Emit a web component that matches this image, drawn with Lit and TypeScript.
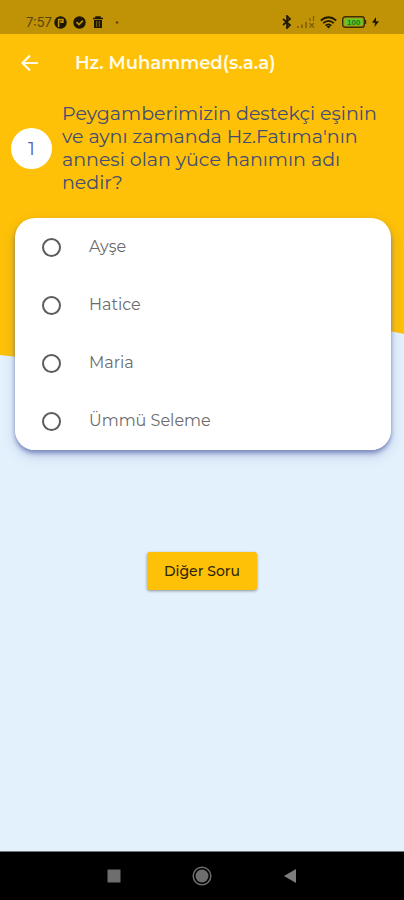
import { LitElement, html, css } from "lit";
import { customElement, property, state } from "lit/decorators.js";

@customElement("status-bar")
class StatusBar extends LitElement {
  static styles = css`
    :host {
      display: flex;
      align-items: flex-end;
      justify-content: space-between;
      box-sizing: border-box;
      height: 34px;
      padding: 0 25px 4px 26px;
      background: #c09205;
      color: #33290a;
      font: 13px/16px Inter, "Open Sans", sans-serif;
    }
    .group {
      display: flex;
      align-items: center;
      height: 16px;
    }
    .left {
      gap: 6px;
    }
    .time {
      color: #5a450a;
      margin-right: -4px;
    }
    .right {
      gap: 5px;
    }
    svg {
      display: block;
    }
    .level {
      font: 700 8px "Liberation Sans", sans-serif;
      fill: #25790f;
    }
  `;
  render() {
    return html`
      <div class="group left">
        <span class="time">7:57</span>
        <svg width="13" height="13" viewBox="0 0 13 13">
          <circle cx="6.5" cy="6.5" r="6.2" fill="#1d1704" />
          <path d="M4.6 11V3.6H9V6.2H7V4.8" fill="none" stroke="#c09205" stroke-width="1.5" />
        </svg>
        <svg width="13" height="13" viewBox="0 0 13 13">
          <circle cx="6.5" cy="6.5" r="6.2" fill="#1d1704" />
          <path d="M3.5 6.2 6 8.6 9.8 4.6" fill="none" stroke="#c09205" stroke-width="1.7" />
        </svg>
        <svg width="12" height="13" viewBox="0 0 12 13">
          <path d="M1 2.5H11M4 2V1H8V2" fill="none" stroke="#1d1704" stroke-width="1.5" />
          <path d="M2 4H10V12H2Z" fill="#1d1704" />
          <path d="M4.7 5V11M7.3 5V11" stroke="#8a6905" stroke-width="0.9" />
        </svg>
        <svg width="12" height="13" viewBox="0 0 12 13">
          <circle cx="7" cy="6.5" r="1.2" fill="#5a450a" />
        </svg>
      </div>
      <div class="group right">
        <svg width="10" height="14" viewBox="0 0 10 14">
          <path d="M1 4 8 10 5 13V1L8 4 1 10" fill="none" stroke="#1d1704" stroke-width="1.7" />
        </svg>
        <svg width="18" height="12" viewBox="0 0 18 12">
          <path d="M1 12V10M5 12V8.5M9 12V6" stroke="#8a6905" stroke-width="2" />
          <path d="M12.500 7 17 11.5M17 7 12.500 11.5M13 5V2M16.5 5V0" stroke="#7d5f05" stroke-width="1.2" />
        </svg>
        <svg width="17" height="13" viewBox="0 0 17 13">
          <g fill="none" stroke="#1d1704" stroke-width="1.7">
            <path d="M0.8 4.5Q8.5-2 16.2 4.5" />
            <path d="M3.2 7.2Q8.5 2.4 13.8 7.2" />
            <path d="M5.6 9.6Q8.5 7 11.4 9.6" />
          </g>
          <path d="M6.6 10.4Q8.5 9 10.4 10.4L8.5 12.6Z" fill="#1d1704" />
        </svg>
        <svg width="25" height="12" viewBox="0 0 25 12">
          <rect x="0.7" y="0.7" width="21.6" height="10.6" rx="2.5" fill="none" stroke="#3c3006" stroke-width="1.4" />
          <rect x="2.5" y="2.5" width="18" height="7" rx="1" fill="#5cc92e" />
          <path d="M23.5 4V8" stroke="#3c3006" stroke-width="1.4" />
          <text class="level" x="5" y="9">100</text>
        </svg>
        <svg width="7" height="10" viewBox="0 0 7 10">
          <path d="M4 0 0 5.8H3L2.5 10 7 4.2H4Z" fill="#1d1704" />
        </svg>
      </div>
    `;
  }
}

@customElement("answer-list")
class AnswerList extends LitElement {
  @property({ attribute: false }) answers: string[] = [];
  @state() private chosen = -1;

  static styles = css`
    fieldset {
      margin: 0;
      padding: 0;
      border: 0;
      border-radius: 20px;
      background: #fff;
      box-shadow: 0 3px 4px #4b5aa099, 0 6px 12px #4b5aa040;
    }
    .answer {
      display: flex;
      align-items: center;
      gap: 28px;
      height: 58px;
      padding: 0 27px;
      color: #6c6c6c;
      font-size: 16px;
      line-height: 22px;
    }
    input {
      appearance: none;
      flex: none;
      box-sizing: border-box;
      width: 19px;
      height: 19px;
      margin: 0;
      border: 2px solid #5c5c5c;
      border-radius: 50%;
    }
    input:checked {
      background: radial-gradient(#5c5c5c 45%, #fff 50%);
    }
  `;
  render() {
    return html`<fieldset aria-label="Cevaplar">
      ${this.answers.map(
        (text, i) => html`<label class="answer">
          <input type="radio" name="answer" .checked=${this.chosen === i} @change=${() => (this.chosen = i)} />
          <span>${text}</span>
        </label>`
      )}
    </fieldset>`;
  }
}

@customElement("app-root")
class AppRoot extends LitElement {
  static styles = css`
    :host {
      display: flex;
      flex-direction: column;
      min-height: 100vh;
      background: #e3f1fd;
      font-family: Montserrat, Inter, sans-serif;
    }
    main {
      position: relative;
      z-index: 0;
      flex: 1;
      display: flex;
      flex-direction: column;
    }
    .backdrop {
      position: absolute;
      inset: 0 0 auto;
      z-index: -1;
      width: 100%;
      height: 324px;
    }
    header {
      display: flex;
      align-items: center;
      gap: 36px;
      height: 58px;
      padding: 0 20px;
      color: #fffbe8;
    }
    button {
      font-family: inherit;
      border: 0;
      cursor: pointer;
    }
    .back {
      display: flex;
      padding: 0;
      background: none;
      color: inherit;
    }
    h1 {
      margin: 0;
      font-size: 18px;
      font-weight: 600;
      line-height: 24px;
    }
    .question {
      display: flex;
      align-items: center;
      gap: 10px;
      padding: 10px 11px 0;
    }
    .number {
      flex: none;
      display: grid;
      place-items: center;
      width: 41px;
      height: 41px;
      border-radius: 50%;
      background: #fff;
      color: #5560b0;
      font-size: 19px;
    }
    h2 {
      margin: 0;
      color: #424c74;
      font-size: 19px;
      font-weight: 400;
      line-height: 23px;
    }
    answer-list {
      display: block;
      margin: 24px 13px 0 15px;
    }
    .next {
      align-self: center;
      margin: 102px 0 40px;
      height: 38px;
      padding: 0 17px;
      border-radius: 3px;
      background: #fec107;
      box-shadow: 0 1px 3px #00000066;
      color: #2e2609;
      font-size: 14px;
      font-weight: 500;
    }
    nav {
      display: flex;
      align-items: center;
      justify-content: center;
      gap: 68px;
      height: 48px;
      border-top: 1px solid #6f777d;
      background: #000;
    }
    nav button {
      display: grid;
      place-items: center;
      width: 20px;
      height: 20px;
      padding: 0;
      background: none;
    }
  `;
  render() {
    return html`
      <status-bar></status-bar>
      <main>
        <svg class="backdrop" viewBox="0 0 404 324" preserveAspectRatio="none" aria-hidden="true">
          <path d="M0 0H404V300C340 284 270 302 200 315C130 328 60 328 0 321Z" fill="#fec107" />
        </svg>
        <header>
          <button class="back" aria-label="Geri">
            <svg width="19" height="18" viewBox="0 0 19 18">
              <path d="M18 9H3M10 1.5 2.5 9 10 16.5" fill="none" stroke="currentColor" stroke-width="2.2" />
            </svg>
          </button>
          <h1>Hz. Muhammed(s.a.a)</h1>
        </header>
        <section class="question">
          <span class="number">1</span>
          <h2>Peygamberimizin destekçi eşinin ve aynı zamanda Hz.Fatıma'nın annesi olan yüce hanımın adı nedir?</h2>
        </section>
        <answer-list .answers=${["Ayşe", "Hatice", "Maria", "Ümmü Seleme"]}></answer-list>
        <button class="next">Diğer Soru</button>
      </main>
      <nav>
        <button aria-label="Son uygulamalar">
          <svg width="14" height="14" viewBox="0 0 14 14"><rect x="0.5" y="0.5" width="13" height="13" fill="#6e6e6e" /></svg>
        </button>
        <button aria-label="Ana ekran">
          <svg width="20" height="20" viewBox="0 0 20 20">
            <circle cx="10" cy="10" r="8.8" fill="none" stroke="#6e6e6e" stroke-width="1.5" />
            <circle cx="10" cy="10" r="6.5" fill="#6e6e6e" />
          </svg>
        </button>
        <button aria-label="Geri">
          <svg width="14" height="14" viewBox="0 0 14 14"><path d="M13 0V14L1 7Z" fill="#7d7d7d" /></svg>
        </button>
      </nav>
    `;
  }
}
